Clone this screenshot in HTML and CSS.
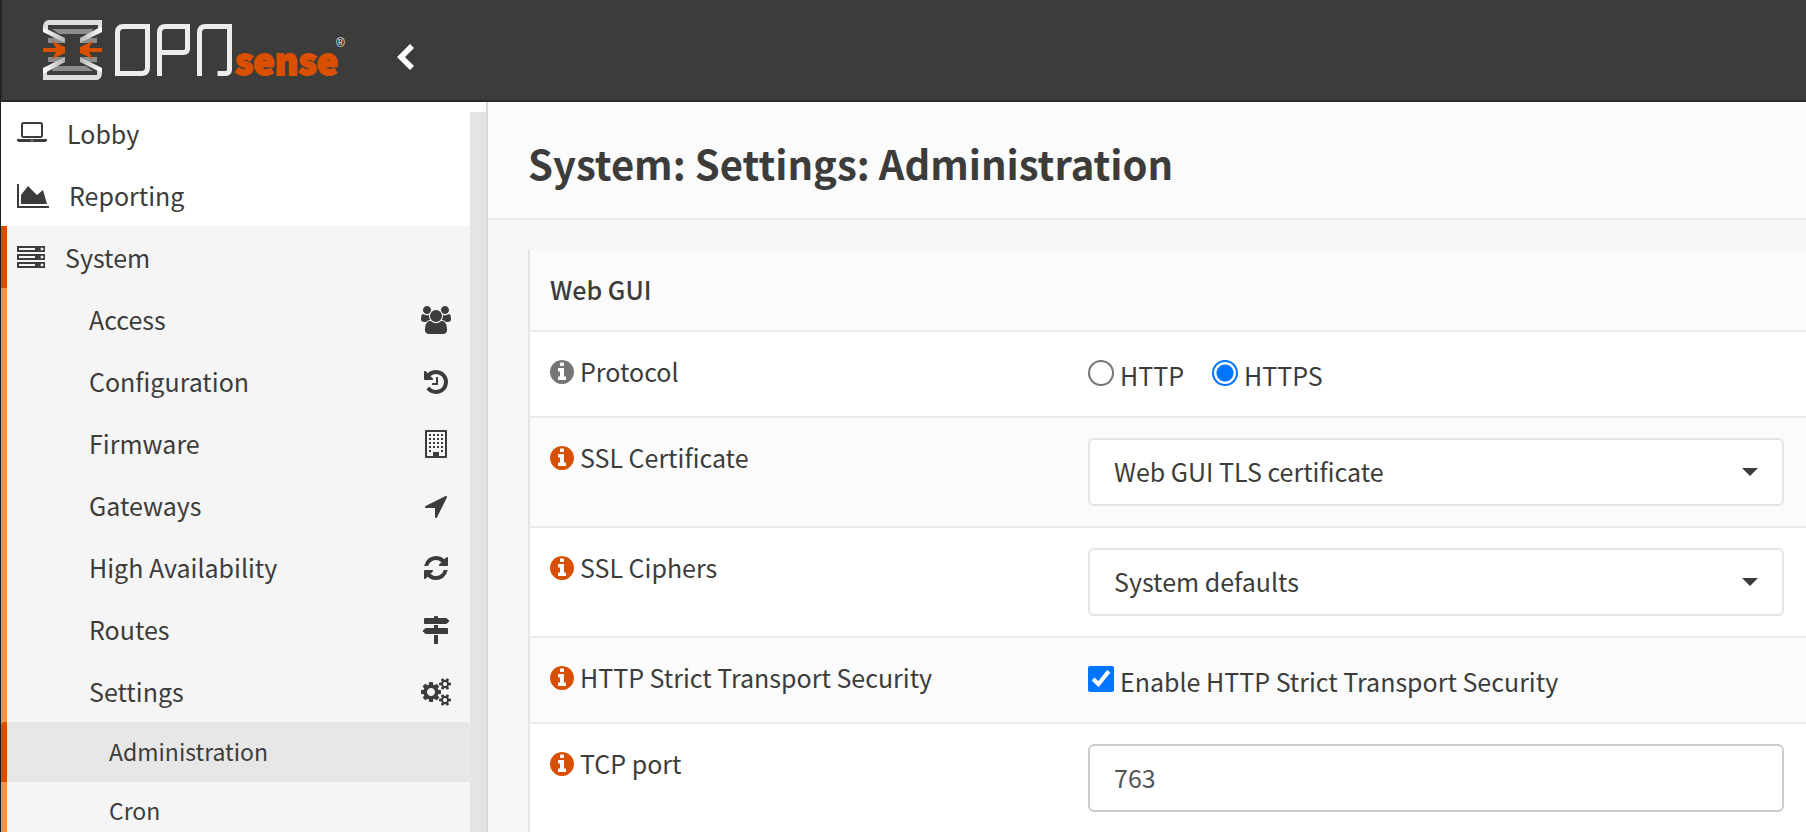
FILE: index.html
```html
<!DOCTYPE html>
<html lang="en">
<head>
<meta charset="utf-8">
<title>System: Settings: Administration</title>
<link rel="stylesheet" href="styles.css">
</head>
<body>
<svg class="sprite" aria-hidden="true">
  <symbol id="laptop" viewBox="0 0 1920 1792"><path d="M416 1152q-66 0-113-47t-47-113v-704q0-66 47-113t113-47h1088q66 0 113 47t47 113v704q0 66-47 113t-113 47h-1088zm-32-864v704q0 13 9.500 22.500t22.500 9.500h1088q13 0 22.500-9.500t9.500-22.500v-704q0-13-9.500-22.500t-22.500-9.500h-1088q-13 0-22.500 9.500t-9.500 22.500zm1376 928h160v96q0 40-47 68t-113 28h-1600q-66 0-113-28t-47-68v-96h1760zm-720 96q16 0 16-16t-16-16h-160q-16 0-16 16t16 16h160z"/></symbol>
  <symbol id="area" viewBox="0 0 2048 1792"><path d="M2048 1536v128h-2048v-1536h128v1408h1920zm-384-1024l256 896h-1664v-576l448-576 576 576z"/></symbol>
  <symbol id="server" viewBox="0 0 1792 1792"><path d="M128 1408h1024v-128h-1024v128zm0-512h1024v-128h-1024v128zm1568 448q0-40-28-68t-68-28-68 28-28 68 28 68 68 28 68-28 28-68zm-1568-960h1024v-128h-1024v128zm1568 448q0-40-28-68t-68-28-68 28-28 68 28 68 68 28 68-28 28-68zm0-512q0-40-28-68t-68-28-68 28-28 68 28 68 68 28 68-28 28-68zm96 832v384h-1792v-384h1792zm0-512v384h-1792v-384h1792zm0-512v384h-1792v-384h1792z"/></symbol>
  <symbol id="users" viewBox="0 0 1920 1792"><path d="M593 896q-162 5-265 128h-134q-82 0-138-40.500t-56-118.500q0-353 124-353 6 0 43.500 21t97.500 42.500 119 21.500q67 0 133-23-5 37-5 66 0 139 81 256zm1071 637q0 120-73 189.500t-194 69.500h-874q-121 0-194-69.500t-73-189.500q0-53 3.500-103.500t14-109 26.500-108.500 43-97.500 62-81 85.500-53.500 111.500-20q10 0 43 21.500t73 48 107 48 135 21.500 135-21.500 107-48 73-48 43-21.500q61 0 111.500 20t85.500 53.500 62 81 43 97.500 26.500 108.500 14 109 3.500 103.500zm-1024-1277q0 106-75 181t-181 75-181-75-75-181 75-181 181-75 181 75 75 181zm704 384q0 159-112.500 271.500t-271.500 112.500-271.500-112.500-112.500-271.500 112.500-271.500 271.500-112.500 271.500 112.500 112.500 271.500zm576 225q0 78-56 118.500t-138 40.500h-134q-103-123-265-128 81-117 81-256 0-29-5-66 66 23 133 23 59 0 119-21.500t97.500-42.500 43.500-21q124 0 124 353zm-128-609q0 106-75 181t-181 75-181-75-75-181 75-181 181-75 181 75 75 181z"/></symbol>
  <symbol id="history" viewBox="0 0 1792 1792"><path d="M1664 896q0 156-61 298t-164 245-245 164-298 61q-172 0-327-72.500t-264-204.500q-7-10-6.500-22.500t8.500-20.500l137-138q10-9 25-9 16 2 23 12 73 95 179 147t225 52q104 0 198.500-40.500t163.500-109.500 109.500-163.500 40.500-198.500-40.500-198.500-109.500-163.500-163.500-109.500-198.500-40.500q-98 0-188 35.500t-160 101.500l137 138q31 30 14 69-17 40-59 40h-448q-26 0-45-19t-19-45v-448q0-42 40-59 39-17 69 14l130 129q107-101 244.500-156.500t284.500-55.500q156 0 298 61t245 164 164 245 61 298zm-640-288v448q0 14-9 23t-23 9h-320q-14 0-23-9t-9-23v-64q0-14 9-23t23-9h224v-352q0-14 9-23t23-9h64q14 0 23 9t9 23z"/></symbol>
  <symbol id="building" viewBox="0 0 28 28"><path fill-rule="evenodd" d="M4 0h20q1 0 1 1v26q0 1-1 1h-20q-1 0-1-1v-26q0-1 1-1zM5 2v24h6v-4h6v4h6v-24z"/><path d="M7 4h2v2h-2zM11 4h2v2h-2zM15 4h2v2h-2zM19 4h2v2h-2zM7 8h2v2h-2zM11 8h2v2h-2zM15 8h2v2h-2zM19 8h2v2h-2zM7 12h2v2h-2zM11 12h2v2h-2zM15 12h2v2h-2zM19 12h2v2h-2zM7 16h2v2h-2zM11 16h2v2h-2zM15 16h2v2h-2zM19 16h2v2h-2zM7 20h2v2h-2zM19 20h2v2h-2zM11 22h6v5h-6z"/></symbol>
  <symbol id="arrow" viewBox="0 0 1792 1792"><path d="M1593 349l-640 1280q-17 35-57 35-5 0-15-2-22-5-35.500-22.500t-13.500-39.500v-576h-576q-22 0-39.500-13.500t-22.500-35.500 4-42 29-30l1280-640q13-7 29-7 27 0 45 19 15 14 18.500 34.500t-6.500 39.500z"/></symbol>
  <symbol id="refresh" viewBox="0 0 1792 1792"><path d="M1639 1056q0 5-1 7-64 268-268 434.500t-478 166.500q-146 0-282.500-55t-243.500-157l-129 129q-19 19-45 19t-45-19-19-45v-448q0-26 19-45t45-19h448q26 0 45 19t19 45-19 45l-137 137q71 66 161 102t187 36q134 0 250-65t186-179q11-17 53-117 8-23 30-23h192q13 0 22.500 9.500t9.500 22.500zm25-800v448q0 26-19 45t-45 19h-448q-26 0-45-19t-19-45 19-45l138-138q-148-137-349-137-134 0-250 65t-186 179q-11 17-53 117-8 23-30 23h-199q-13 0-22.500-9.500t-9.500-22.500v-7q65-268 270-434.500t480-166.500q146 0 284 55.500t245 156.500l130-129q19-19 45-19t45 19 19 45z"/></symbol>
  <symbol id="signs" viewBox="0 0 1792 1792"><path d="M1745 297q10 10 10 23t-10 23l-141 141q-28 28-68 28h-1344q-26 0-45-19t-19-45v-256q0-26 19-45t45-19h576v-64q0-26 19-45t45-19h128q26 0 45 19t19 45v64h512q40 0 68 28zm-977 919h256v512q0 26-19 45t-45 19h-128q-26 0-45-19t-19-45v-512zm832-448q26 0 45 19t19 45v256q0 26-19 45t-45 19h-1344q-40 0-68-28l-141-141q-10-10-10-23t10-23l141-141q28-28 68-28h512v-192h256v192h576z"/></symbol>
  <symbol id="cogs" viewBox="0 0 1920 1792"><path d="M896 896q0-106-75-181t-181-75-181 75-75 181 75 181 181 75 181-75 75-181zm768 512q0-52-38-90t-90-38-90 38-38 90q0 53 37.500 90.500t90.500 37.500 90.500-37.500 37.500-90.500zm0-1024q0-52-38-90t-90-38-90 38-38 90q0 53 37.500 90.500t90.500 37.500 90.500-37.500 37.500-90.500zm-384 421v185q0 10-7 19.500t-16 10.500l-155 24q-11 35-32 76 34 48 90 115 7 11 7 20 0 12-7 19-23 30-82.500 89.500t-78.500 59.500q-11 0-21-7l-115-90q-37 19-77 31-11 108-23 155-7 24-30 24h-186q-11 0-20-7.500t-10-17.500l-23-153q-34-10-75-31l-118 89q-7 7-20 7-11 0-21-8-144-133-144-160 0-9 7-19 10-14 41-53t47-61q-23-44-35-82l-152-24q-10-1-17-9.500t-7-19.500v-185q0-10 7-19.500t16-10.500l155-24q11-35 32-76-34-48-90-115-7-11-7-20 0-12 7-20 22-30 82-89t79-59q11 0 21 7l115 90q34-18 77-32 11-108 23-154 7-24 30-24h186q11 0 20 7.500t10 17.500l23 153q34 10 75 31l118-89q8-7 20-7 11 0 21 8 144 133 144 160 0 8-7 19-12 16-42 54t-45 60q23 48 34 82l152 23q10 2 17 10.500t7 19.500zm640 533v140q0 16-149 31-12 27-30 52 51 113 51 138 0 4-4 7-122 71-124 71-8 0-46-47t-52-68q-20 2-30 2t-30-2q-14 21-52 68t-46 47q-2 0-124-71-4-3-4-7 0-25 51-138-18-25-30-52-149-15-149-31v-140q0-16 149-31 13-29 30-52-51-113-51-138 0-4 4-7 4-2 35-20t59-34 30-16q8 0 46 46.500t52 67.500q20-2 30-2t30 2q51-71 92-112l6-2q4 0 124 70 4 3 4 7 0 25-51 138 17 23 30 52 149 15 149 31zm0-1024v140q0 16-149 31-12 27-30 52 51 113 51 138 0 4-4 7-122 71-124 71-8 0-46-47t-52-68q-20 2-30 2t-30-2q-14 21-52 68t-46 47q-2 0-124-71-4-3-4-7 0-25 51-138-18-25-30-52-149-15-149-31v-140q0-16 149-31 13-29 30-52-51-113-51-138 0-4 4-7 4-2 35-20t59-34 30-16q8 0 46 46.500t52 67.500q20-2 30-2t30 2q51-71 92-112l6-2q4 0 124 70 4 3 4 7 0 25-51 138 17 23 30 52 149 15 149 31z"/></symbol>
  <symbol id="info" viewBox="128 128 1536 1536"><path d="M1152 1376v-160q0-14-9-23t-23-9h-96v-512q0-14-9-23t-23-9h-320q-14 0-23 9t-9 23v160q0 14 9 23t23 9h96v320h-96q-14 0-23 9t-9 23v160q0 14 9 23t23 9h448q14 0 23-9t9-23zm-128-896v-160q0-14-9-23t-23-9h-192q-14 0-23 9t-9 23v160q0 14 9 23t23 9h192q14 0 23-9t9-23zm640 416q0 209-103 385.500t-279.500 279.500-385.500 103-385.500-103-279.500-279.500-103-385.500 103-385.500 279.500-279.500 385.500-103 385.500 103 279.500 279.500 103 385.500z"/></symbol>
</svg>

<header class="topbar">
  <a class="brand" href="#" aria-label="OPNsense">
    <svg class="brand-art" viewBox="0 0 306 64" aria-hidden="true">
      <defs>
        <linearGradient id="band" x1="0" x2="1"><stop offset="0" stop-color="#ffffff"/><stop offset="1" stop-color="#b4b4b6"/></linearGradient>
        <linearGradient id="bandr" x1="1" x2="0"><stop offset="0" stop-color="#ffffff"/><stop offset="1" stop-color="#b4b4b6"/></linearGradient>
      </defs>
      <g id="hourglass">
        <path fill="#8c8c8c" d="M9 11h41l-2 5h-32z"/>
        <path fill="#8c8c8c" d="M5 20h8l9 5H5zM54 20h-8l-9 5h17z"/>
        <path fill="#dedee0" d="M6 2h53v6l-4 3V7H5v5L0 9V8Q1 2 6 2z"/>
        <path fill="url(#band)" d="M0 9l22 11v5L0 14z"/>
        <path fill="url(#bandr)" d="M59 8v6L37 25v-5z"/>
      </g>
      <use href="#hourglass" transform="rotate(180 29.500 32)"/>
      <path fill="#d94f00" d="M0 30h13l-4-7 13 6v6l-13 6 4-7H0zM59 30H46l4-7-13 6v6l13 6-4-7h13z"/>
      <g fill="none" stroke="#ededed" stroke-width="5">
        <path d="M74.500 55.500V14.500Q74.500 8.500 80.500 8.500h24v41q0 6-6 6z"/>
        <path d="M116.500 58V14.500q0-6 6-6h22v22q0 4-4 4h-24"/>
        <path d="M156.500 58V14.500q0-6 6-6h24v43q0 4-4 4h-8"/>
      </g>
      <text class="brand-word" x="192" y="57">sense</text>
      <text class="brand-mark" x="293" y="29">®</text>
    </svg>
  </a>
  <button class="collapse" type="button" aria-label="Collapse menu">
    <svg viewBox="0 0 18 26" aria-hidden="true"><path d="M13 0l4 4-9 9 9 9-4 4L0 13z"/></svg>
  </button>
</header>

<div class="shell">
  <nav class="sidebar" aria-label="Main menu">
    <ul class="menu">
      <li><a class="item" href="#"><svg class="icon w30"><use href="#laptop"/></svg>Lobby</a></li>
      <li><a class="item" href="#"><svg class="icon w32"><use href="#area"/></svg>Reporting</a></li>
      <li><a class="item open" href="#"><svg class="icon"><use href="#server"/></svg>System</a>
        <ul class="menu sub">
          <li><a class="item" href="#">Access<svg class="icon w30"><use href="#users"/></svg></a></li>
          <li><a class="item" href="#">Configuration<svg class="icon"><use href="#history"/></svg></a></li>
          <li><a class="item" href="#">Firmware<svg class="icon"><use href="#building"/></svg></a></li>
          <li><a class="item" href="#">Gateways<svg class="icon"><use href="#arrow"/></svg></a></li>
          <li><a class="item" href="#">High Availability<svg class="icon"><use href="#refresh"/></svg></a></li>
          <li><a class="item" href="#">Routes<svg class="icon"><use href="#signs"/></svg></a></li>
          <li><a class="item" href="#">Settings<svg class="icon w30"><use href="#cogs"/></svg></a>
            <ul class="menu leaf">
              <li><a class="item active" href="#">Administration</a></li>
              <li><a class="item" href="#">Cron</a></li>
            </ul>
          </li>
        </ul>
      </li>
    </ul>
  </nav>
  <main class="content">
    <h1 class="page-title">System: Settings: Administration</h1>
    <form class="panel">
      <table class="settings">
        <colgroup><col class="col-label"><col></colgroup>
        <thead><tr><th colspan="2">Web GUI</th></tr></thead>
        <tbody>
          <tr><td><span class="label muted"><svg class="info"><use href="#info"/></svg>Protocol</span></td>
            <td><div class="choices">
              <label class="choice"><input type="radio" name="protocol"><span>HTTP</span></label>
              <label class="choice"><input type="radio" name="protocol" checked><span>HTTPS</span></label>
            </div></td></tr>
          <tr><td><label class="label" for="cert"><svg class="info"><use href="#info"/></svg>SSL Certificate</label></td>
            <td><select class="field pick" id="cert"><option>Web GUI TLS certificate</option></select></td></tr>
          <tr><td><label class="label" for="ciphers"><svg class="info"><use href="#info"/></svg>SSL Ciphers</label></td>
            <td><select class="field pick" id="ciphers"><option>System defaults</option></select></td></tr>
          <tr><td><span class="label"><svg class="info"><use href="#info"/></svg>HTTP Strict Transport Security</span></td>
            <td><div class="choices"><label class="choice"><input type="checkbox" checked><span>Enable HTTP Strict Transport Security</span></label></div></td></tr>
          <tr><td><label class="label" for="port"><svg class="info"><use href="#info"/></svg>TCP port</label></td>
            <td><input class="field" id="port" type="text" value="763"></td></tr>
        </tbody>
      </table>
    </form>
  </main>
</div>
</body>
</html>
```

FILE: styles.css
```css
* { box-sizing: border-box; }

body {
  margin: 0;
  height: 100vh;
  overflow: hidden;
  display: flex;
  flex-direction: column;
  border-left: 1px solid #1c1b1d;
  background: #f7f7f7;
  color: #3c3c3b;
  font: 25px/36px "Noto Sans CJK JP", "Noto Sans CJK SC", "Open Sans", sans-serif;
}

.sprite { position: absolute; width: 0; height: 0; }

.topbar {
  flex: none;
  display: flex;
  align-items: flex-start;
  height: 102px;
  padding: 18px 0 0 40px;
  border-left: 2px solid #333231;
  border-bottom: 2px solid #2a2829;
  background: #3c3c3a;
}
.brand { display: block; }
.brand-art { display: block; width: 306px; height: 64px; overflow: visible; }
.brand-word { fill: #d94f00; stroke: #d94f00; stroke-width: 2px; font: 900 36px "Noto Sans CJK JP", sans-serif; }
.brand-mark { fill: #ededed; font: 12px "Liberation Sans", sans-serif; }
.collapse { margin: 26px 0 0 48px; padding: 0; border: 0; background: none; }
.collapse svg { display: block; width: 18px; height: 26px; fill: #fff; }

.shell { flex: 1; display: flex; min-height: 0; }

.sidebar {
  flex: none;
  width: 487px;
  overflow: hidden;
  padding-right: 16px;
  border-right: 2px solid #d9d9d9;
  background: linear-gradient(#fff, #fff) right top / 16px 10px no-repeat,
    linear-gradient(#e4e4e4, #e4e4e4) right top / 16px 100% no-repeat, #fff;
}
.menu { margin: 0; padding: 0; list-style: none; }
.item {
  display: flex;
  align-items: center;
  gap: 20px;
  height: 62px;
  padding: 0 16px;
  color: inherit;
  text-decoration: none;
}
.icon { flex: none; width: 28px; height: 28px; margin-top: 2px; fill: currentColor; }
.w30 { width: 30px; }
.w32 { width: 32px; }
.open { padding-left: 10px; border-left: 6px solid #d94f00; background: #f5f5f5; }
.sub { border-left: 6px solid #f0954f; background: #f5f5f5; }
.sub .item { justify-content: space-between; padding: 0 19px 0 82px; }
.sub .item .icon:not(.w30) { margin-right: 1px; }
.leaf .item { height: 58px; padding-left: 102px; padding-bottom: 2px; font-size: 23px; }
.leaf .active {
  height: 60px;
  margin-left: -6px;
  border-left: 6px solid #d94f00;
  border-radius: 4px 4px 0 0;
  background: #e7e7e7;
}

.content { flex: 1; min-width: 0; }
.page-title {
  margin: 0;
  padding: 37px 40px 31px;
  border-bottom: 2px solid #ebebeb;
  background: #fbfbfb;
  font-size: 40px;
  line-height: 48px;
  font-weight: 600;
}
.panel { margin: 30px 0 0 40px; border-left: 2px solid #e5e5e5; }
.settings { width: 100%; border-collapse: collapse; table-layout: fixed; }
.col-label { width: 538px; }
.settings th { padding: 21px 20px 23px; border-bottom: 2px solid #ededed; background: #fbfbfb; text-align: left; font-weight: 500; }
.settings td { padding: 20px 22px 20px 20px; border-bottom: 2px solid #ededed; background: #fff; vertical-align: top; }
.settings tr:nth-child(even) td { background: #fbfbfb; }
.settings tr:last-child td { border-bottom: 0; padding-bottom: 40px; }

.label { display: flex; align-items: center; gap: 6px; height: 38px; }
.info { flex: none; width: 24px; height: 24px; margin-top: 2px; fill: #d94f00; }
.muted .info { fill: #757575; }
.choices { display: flex; gap: 28px; height: 44px; padding-top: 2px; align-items: center; }
.choice { display: flex; align-items: center; gap: 6px; }
.choice input { width: 26px; height: 26px; margin: 0 0 4px; accent-color: #0075ff; }
.choice input[type="radio"] { appearance: none; border: 2px solid #767676; border-radius: 50%; background: #fff; }
.choice input[type="radio"]:checked { border-color: #0075ff; background: radial-gradient(circle, #0075ff 8px, #fff 9px); }

.field {
  display: block;
  width: 100%;
  height: 68px;
  padding: 0 24px 2px;
  border: 2px solid #ccc;
  border-radius: 6px;
  background: #fff;
  color: #555;
  font: inherit;
}
.pick {
  appearance: none;
  border-color: #e5e5e5;
  color: #3c3c3b;
  background: #fff url("data:image/svg+xml,%3Csvg xmlns='http://www.w3.org/2000/svg' viewBox='0 0 16 8'%3E%3Cpath fill='%233c3c3b' d='M0 0h16L8 8z'/%3E%3C/svg%3E") right 24px center / 16px 8px no-repeat;
}
```
